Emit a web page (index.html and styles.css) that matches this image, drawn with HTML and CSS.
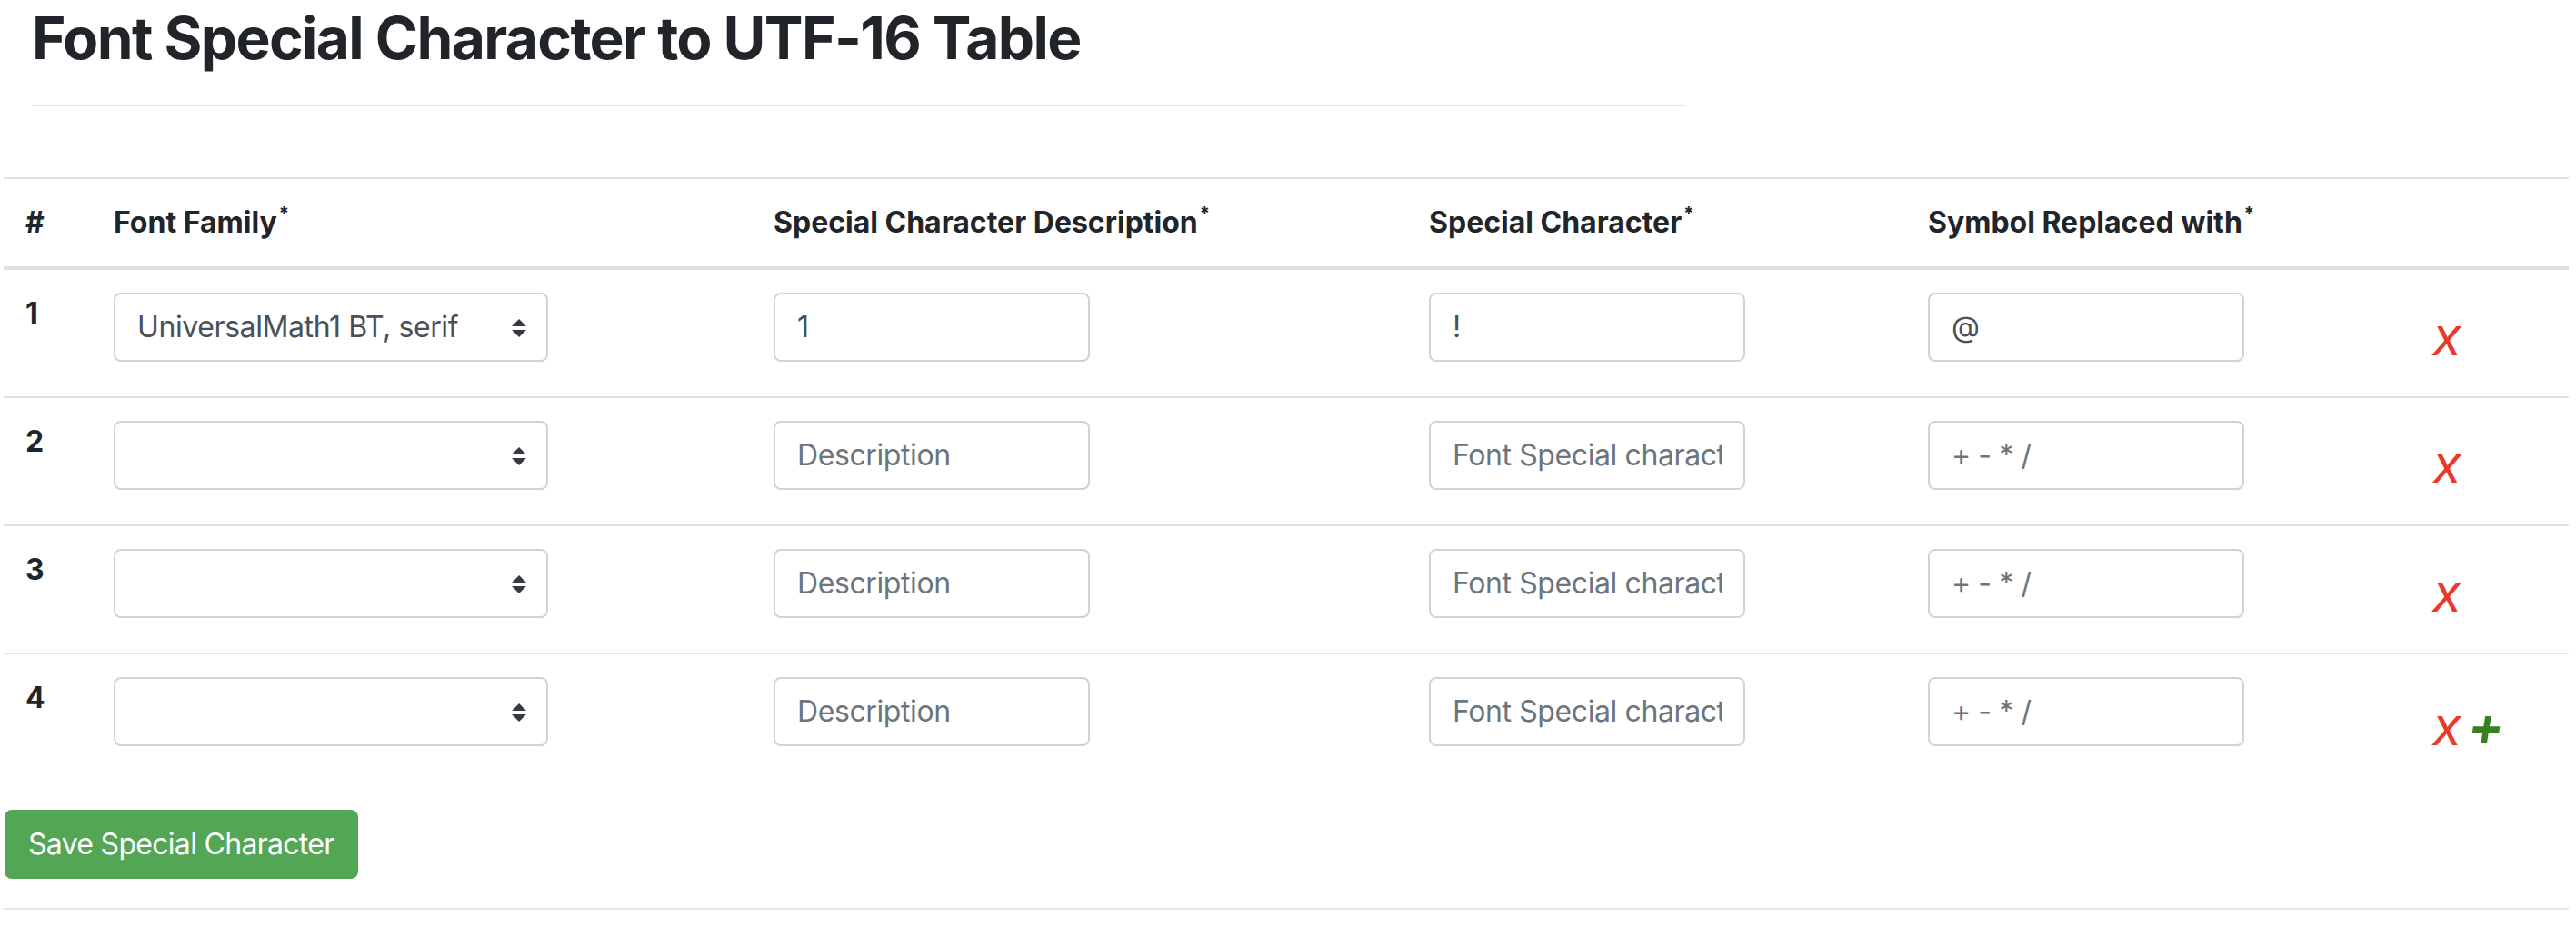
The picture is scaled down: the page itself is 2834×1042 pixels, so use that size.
FILE: index.html
```html
<!DOCTYPE html>
<html lang="en">
<head>
<meta charset="utf-8">
<title>Font Special Character to UTF-16 Table</title>
<link rel="stylesheet" href="styles.css">
</head>
<body>
<div class="title-block">
  <h2 class="page-title">Font Special Character to UTF-16 Table</h2>
  <div class="title-rule"></div>
</div>

<table class="char-table">
  <colgroup>
    <col class="c-num"><col class="c-font"><col class="c-desc"><col class="c-char"><col class="c-sym"><col class="c-act">
  </colgroup>
  <thead>
    <tr>
      <th>#</th>
      <th>Font Family<sup>*</sup></th>
      <th>Special Character Description<sup>*</sup></th>
      <th>Special Character<sup>*</sup></th>
      <th>Symbol Replaced with<sup>*</sup></th>
      <th></th>
    </tr>
  </thead>
  <tbody>
    <tr>
      <td class="num">1</td>
      <td><div class="select-wrap"><select class="ctl select"><option>UniversalMath1 BT, serif</option></select><svg class="arrows" width="16" height="20" viewBox="0 0 4 5"><path fill="#343a40" d="M2 0L0 2h4zm0 5L0 3h4z"/></svg></div></td>
      <td><input class="ctl text" type="text" value="1" placeholder="Description"></td>
      <td><input class="ctl text" type="text" value="!" placeholder="Font Special character"></td>
      <td><input class="ctl text" type="text" value="@" placeholder="+ - * /"></td>
      <td><div class="actions"><span class="del">X</span></div></td>
    </tr>
    <tr>
      <td class="num">2</td>
      <td><div class="select-wrap"><select class="ctl select"><option></option></select><svg class="arrows" width="16" height="20" viewBox="0 0 4 5"><path fill="#343a40" d="M2 0L0 2h4zm0 5L0 3h4z"/></svg></div></td>
      <td><input class="ctl text" type="text" placeholder="Description"></td>
      <td><input class="ctl text" type="text" placeholder="Font Special character"></td>
      <td><input class="ctl text" type="text" placeholder="+ - * /"></td>
      <td><div class="actions"><span class="del">X</span></div></td>
    </tr>
    <tr>
      <td class="num">3</td>
      <td><div class="select-wrap"><select class="ctl select"><option></option></select><svg class="arrows" width="16" height="20" viewBox="0 0 4 5"><path fill="#343a40" d="M2 0L0 2h4zm0 5L0 3h4z"/></svg></div></td>
      <td><input class="ctl text" type="text" placeholder="Description"></td>
      <td><input class="ctl text" type="text" placeholder="Font Special character"></td>
      <td><input class="ctl text" type="text" placeholder="+ - * /"></td>
      <td><div class="actions"><span class="del">X</span></div></td>
    </tr>
    <tr>
      <td class="num">4</td>
      <td><div class="select-wrap"><select class="ctl select"><option></option></select><svg class="arrows" width="16" height="20" viewBox="0 0 4 5"><path fill="#343a40" d="M2 0L0 2h4zm0 5L0 3h4z"/></svg></div></td>
      <td><input class="ctl text" type="text" placeholder="Description"></td>
      <td><input class="ctl text" type="text" placeholder="Font Special character"></td>
      <td><input class="ctl text" type="text" placeholder="+ - * /"></td>
      <td><div class="actions"><span class="del">X</span><span class="add">+</span></div></td>
    </tr>
  </tbody>
</table>

<button class="save-btn" type="button">Save Special Character</button>
<div class="bottom-rule"></div>
</body>
</html>
```

FILE: styles.css
```css
html, body {
  margin: 0;
  padding: 0;
  background: #fff;
}
body {
  font-family: Inter, "Noto Sans", "Liberation Sans", sans-serif;
  font-size: 32px;
  line-height: 1.5;
  color: #212529;
}

.title-block {
  width: 1820px;
  margin-left: 35px;
}
.page-title {
  margin: 0;
  padding-top: 4px;
  font-size: 64px;
  line-height: 76.8px;
  font-weight: 700;
  color: #212529;
  letter-spacing: -1.6px;
}
.title-rule {
  margin-top: 34px;
  border-top: 2px solid #e6e6e6;
}

.char-table {
  margin: 78px 0 0 4px;
  width: 2822px;
  border-collapse: collapse;
  table-layout: fixed;
}
.c-num { width: 97px; }
.c-font { width: 726px; }
.c-desc { width: 721px; }
.c-char { width: 549px; }
.c-sym { width: 555px; }
.c-act { width: 174px; }

.char-table th {
  text-align: left;
  font-weight: 700;
  padding: 24px;
  line-height: 48px;
  vertical-align: bottom;
  border-top: 2px solid #dee2e6;
  border-bottom: 4px solid #dee2e6;
}
.char-table th sup {
  font-size: 20px;
  line-height: 0;
  vertical-align: 14px;
  margin-left: 2px;
}
.char-table td {
  padding: 24px;
  vertical-align: top;
  border-top: 2px solid #dee2e6;
}
.char-table td.num {
  font-weight: 700;
  line-height: 48px;
}

.ctl {
  box-sizing: border-box;
  height: 76px;
  margin: 1px 0 0 0;
  padding: 12px 24px;
  font-family: inherit;
  font-size: 32px;
  line-height: 48px;
  letter-spacing: -0.4px;
  color: #495057;
  background: #fff;
  border: 2px solid #ced4da;
  border-radius: 8px;
  outline: none;
  display: block;
}
.ctl.text { width: 348px; }
.ctl::placeholder { color: #6c757d; opacity: 1; }

.select-wrap {
  position: relative;
  width: 478px;
}
.ctl.select {
  width: 478px;
  appearance: none;
  -webkit-appearance: none;
  padding-right: 64px;
}
.arrows {
  position: absolute;
  right: 24px;
  top: 29px;
  pointer-events: none;
}

.actions {
  display: flex;
  align-items: baseline;
  gap: 8px;
  padding: 20px 0 3px 0;
  font-size: 44px;
  line-height: 68px;
  font-style: italic;
}
.del {
  color: #e8392b;
  font-weight: 500;
}
.add {
  color: #3b7f23;
  font-weight: 600;
  font-size: 60px;
  line-height: 68px;
}

.save-btn {
  display: block;
  margin: 26px 0 0 5px;
  height: 76px;
  padding: 12px 24px;
  font-family: inherit;
  font-size: 32px;
  line-height: 48px;
  letter-spacing: -0.7px;
  color: #fff;
  background: #53a653;
  border: 2px solid #53a653;
  border-radius: 8px;
}

.bottom-rule {
  margin: 32px 0 0 4px;
  width: 2822px;
  border-top: 2px solid #e6e6e6;
}
```
